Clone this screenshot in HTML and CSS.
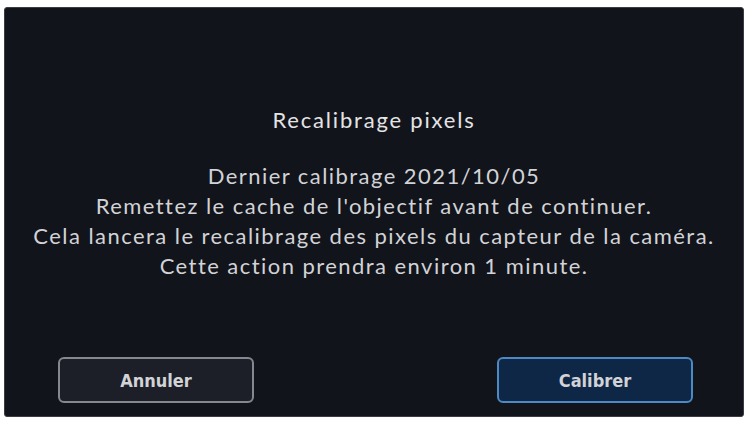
FILE: index.html
```html
<!DOCTYPE html>
<html lang="fr">
<head>
<meta charset="utf-8">
<link rel="stylesheet" href="styles.css">
</head>
<body>
<div class="dialog">
  <h1 class="title">Recalibrage pixels</h1>
  <div class="message">
    <p>Dernier calibrage 2021/10/05</p>
    <p>Remettez le cache de l'objectif avant de continuer.</p>
    <p>Cela lancera le recalibrage des pixels du capteur de la caméra.</p>
    <p>Cette action prendra environ 1 minute.</p>
  </div>
  <div class="actions">
    <button class="btn btn-cancel">Annuler</button>
    <button class="btn btn-primary">Calibrer</button>
  </div>
</div>
</body>
</html>
```

FILE: styles.css
```css
html, body {
  margin: 0;
  padding: 0;
  background: #ffffff;
}
body {
  width: 748px;
  height: 423px;
  overflow: hidden;
  font-family: Lato, "Open Sans", sans-serif;
}
.dialog {
  box-sizing: border-box;
  margin: 7px 4px 0 4px;
  width: 740px;
  height: 410px;
  background: #12141b;
  border: 1px solid #3a3c42;
  border-radius: 3px;
  display: flex;
  flex-direction: column;
  align-items: center;
  padding-top: 99px;
  color: #d2d3d6;
}
.title {
  margin: 0;
  font-size: 22px;
  font-weight: 400;
  line-height: 26px;
  letter-spacing: 1.8px;
  color: #e4e4e6;
}
.message {
  margin-top: 28px;
  text-align: center;
}
.message p {
  margin: 0;
  font-size: 22px;
  line-height: 30px;
  letter-spacing: 1.45px;
  white-space: nowrap;
}
.actions {
  margin-top: auto;
  margin-bottom: 13px;
  align-self: stretch;
  display: flex;
  justify-content: space-between;
  padding: 0 50px 0 53px;
}
.btn {
  box-sizing: border-box;
  width: 196px;
  height: 46px;
  border-radius: 6px;
  font-family: "Liberation Sans Narrow", "DejaVu Sans Condensed", sans-serif;
  font-size: 18px;
  font-weight: 700;
  color: #d2d3d6;
}
.btn-cancel {
  background: #1c1f27;
  border: 2px solid #85888e;
}
.btn-primary {
  background: #0f2746;
  border: 2px solid #4d89c2;
}
```
